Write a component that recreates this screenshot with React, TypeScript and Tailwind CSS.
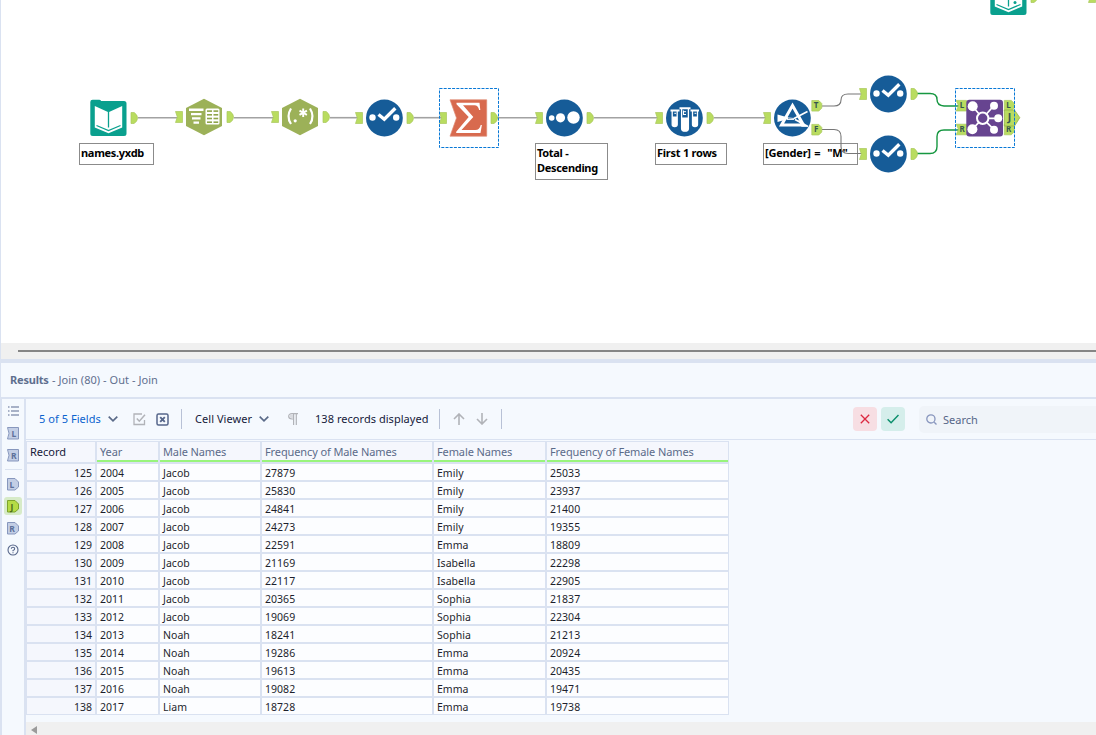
import type { ReactNode } from "react";

const rows: [number, number, string, number, string, number][] = [
  [125, 2004, "Jacob", 27879, "Emily", 25033],
  [126, 2005, "Jacob", 25830, "Emily", 23937],
  [127, 2006, "Jacob", 24841, "Emily", 21400],
  [128, 2007, "Jacob", 24273, "Emily", 19355],
  [129, 2008, "Jacob", 22591, "Emma", 18809],
  [130, 2009, "Jacob", 21169, "Isabella", 22298],
  [131, 2010, "Jacob", 22117, "Isabella", 22905],
  [132, 2011, "Jacob", 20365, "Sophia", 21837],
  [133, 2012, "Jacob", 19069, "Sophia", 22304],
  [134, 2013, "Noah", 18241, "Sophia", 21213],
  [135, 2014, "Noah", 19286, "Emma", 20924],
  [136, 2015, "Noah", 19613, "Emma", 20435],
  [137, 2016, "Noah", 19082, "Emma", 19471],
  [138, 2017, "Liam", 18728, "Emma", 19738],
];

const headers = ["Record", "Year", "Male Names", "Frequency of Male Names", "Female Names", "Frequency of Female Names"];

/* ---------- Canvas tools (each drawn in a 60x60 box centred on 30,30) ---------- */

function InPort() {
  return <path d="M1.5 24.5h7v11h-7l1.8-5.5z" fill="#b9dc60" stroke="#a9c75c" strokeWidth=".7" />;
}

function OutPort() {
  return <path d="M53 24.5h3.2q3.3 2.2 3.3 5.5t-3.3 5.5H53z" fill="#b9dc60" stroke="#a9c75c" strokeWidth=".7" />;
}

function Tool({ x, y, children }: { x: number; y: number; children: ReactNode }) {
  return (
    <svg className="absolute size-[60px] overflow-visible" style={{ left: x - 30, top: y - 30 }} viewBox="0 0 60 60">
      {children}
    </svg>
  );
}

function BookTool() {
  return (
    <>
      <path d="M12.300 14q0-2.300 2.300-2.300h6.500q1.500 0 2 1.300h22.900q2.500 0 2.500 2.500v30q0 2.500-2.500 2.500H14.800q-2.500 0-2.500-2.500z" fill="#0aa08e" />
      <path d="M16.800 18l13.700 6.200L44.200 18v21.500L30.500 45.200 16.800 39.500z" fill="#fff" />
      <path d="M30.500 24v15.500M18.500 37.500l12 5 12-5" fill="none" stroke="#0aa08e" strokeWidth="1.300" />
    </>
  );
}

function Hexagon() {
  return <path d="M30 11.700l18 9.200v18.200l-18 9.200-18-9.200V20.900z" fill="#9cb158" />;
}

function TextToColumns() {
  return (
    <>
      <Hexagon />
      <path d="M15 21.500h14.500v2.500H15zM17 26h10.500v2.300H17zM18 30.300h8.500v2.300H18zM19.500 34.500h5.500v2.300h-5.500z" fill="#fff" />
      <rect x="31.500" y="21.500" width="14" height="16" rx="1.500" fill="#fff" />
      <g fill="#8fa54a">
        {[23.3, 27, 30.7, 34.4].map((y) => (
          <g key={y}>
            <rect x="33" y={y} width="5" height="1.600" />
            <rect x="39.500" y={y} width="4.700" height="1.600" />
          </g>
        ))}
      </g>
    </>
  );
}

function RegexTool() {
  return (
    <>
      <Hexagon />
      <g fill="none" stroke="#fff" strokeWidth="2.200">
        <path d="M21 21.500q-5 8 0 15.500M40 21.500q5 8 0 15.500" />
        <path d="M33.200 21.500v8.500M29.500 23.600l7.400 4.300M36.900 23.600l-7.400 4.300" strokeWidth="1.900" />
      </g>
      <circle cx="25.200" cy="33.800" r="1.600" fill="#fff" />
    </>
  );
}

function Disc() {
  return <circle cx="30.400" cy="30" r="18.400" fill="#165c98" />;
}

function SelectTool() {
  return (
    <>
      <Disc />
      <circle cx="18.500" cy="29.500" r="3.200" fill="#fff" />
      <circle cx="42.200" cy="29.500" r="3.200" fill="#fff" />
      <path d="M24.500 26.500l5.800 4.700 11-11" fill="none" stroke="#fff" strokeWidth="3.400" />
    </>
  );
}

function SummarizeTool() {
  return (
    <>
      <path d="M12 11.800H48.700V48.200H12L18.500 30z" fill="#d86a4e" stroke="#e08d75" strokeWidth=".7" />
      <path
        d="M18.500 14.700h23l.8 7.300h-1.200q-.8-4.700-4.700-4.700H25l10.300 11.700-11.800 13h13.800q4.400 0 5.400-5h1.200l-1.400 8H18.200v-1.200l12.500-14.800L18.500 16.200z"
        fill="#fff"
      />
    </>
  );
}

function SortTool() {
  return (
    <>
      <Disc />
      <circle cx="17.700" cy="30" r="2.800" fill="#fff" />
      <circle cx="26.500" cy="29.800" r="4.600" fill="#fff" />
      <circle cx="39.500" cy="29.500" r="6.200" fill="#fff" />
    </>
  );
}

function SampleTool() {
  return (
    <>
      <Disc />
      <g fill="none" stroke="#fff">
        <path d="M16.500 22.500h9M36.500 22.500h8.500M25.500 20.300h11" strokeWidth="2" />
        <path d="M18.200 23v13.500q0 2 2.500 2t2.500-2V23M38.500 23v13.500q0 2 2.500 2t2.500-2V23M27.600 20v20.500q0 2.700 3.400 2.700t3.400-2.700V20" strokeWidth="1.300" />
      </g>
      <path d="M18.200 28.500h5v8q0 2-2.500 2t-2.500-2zM38.500 28.500h5v8q0 2-2.500 2t-2.500-2zM27.600 29.500h6.800v11q0 2.700-3.400 2.700t-3.400-2.700z" fill="#fff" />
      <path d="M29.500 22.500v4.500M29.500 23.700h2.500M29.500 26.500h2.500M20.300 25.300h1.800M40.500 25.300h1.800" stroke="#fff" strokeWidth="1" />
    </>
  );
}

function Letter({ x, y, children, big }: { x: number; y: number; children: string; big?: boolean }) {
  return (
    <text x={x} y={y} textAnchor="middle" fontSize={big ? 10.5 : 8} fontWeight="700" fill="#35564e">
      {children}
    </text>
  );
}

function TagPort({ x, y, label }: { x: number; y: number; label: string }) {
  return (
    <g>
      <path d={`M${x} ${y - 5.3}h7l3 3v4.600l-3 3h-7z`} fill="#b9dc60" stroke="#a9c75c" strokeWidth=".7" />
      <Letter x={x + 4.3} y={y + 2.6}>{label}</Letter>
    </g>
  );
}

function TagInPort({ y, label }: { y: number; label: string }) {
  return (
    <g>
      <path d={`M1.200 ${y - 5.3}H11.500v10.600H1.200l2.300-5.300z`} fill="#b9dc60" stroke="#a9c75c" strokeWidth=".7" />
      <Letter x={7} y={y + 2.6}>{label}</Letter>
    </g>
  );
}

function FilterTool() {
  return (
    <>
      <Disc />
      <path d="M15.500 26.500L26 29.500v1.500l-10.500 3z" fill="#fff" />
      <path d="M30.500 17.500L41.500 37H19.500z" fill="none" stroke="#fff" strokeWidth="3" />
      <path d="M32 30.500L45.500 23.500M33 31.500L46 38.500" stroke="#fff" strokeWidth="1.700" />
      <path d="M36 31.500l9.500 7.200h-6z" fill="#fff" />
      <path d="M25 29.800l8 .8M25 31.500h7" stroke="#fff" strokeWidth=".9" />
    </>
  );
}

function JoinTool() {
  return (
    <>
      <TagInPort y={17.700} label="L" />
      <TagInPort y={41.500} label="R" />
      <TagPort x={49.300} y={17.700} label="L" />
      <TagPort x={49.300} y={41.500} label="R" />
      <rect x="11.300" y="11.700" width="36.700" height="36.700" rx="3" fill="#674490" />
      <g stroke="#fff" strokeWidth="1.700">
        <path d="M17.700 18.500L27.700 30.300M39 17.500L27.700 30.300M43.200 30.300H27.700M17.400 41.200L27.700 30.300M39 41.700L27.700 30.300" />
      </g>
      <g fill="#fff">
        <circle cx="17.700" cy="18.300" r="5" />
        <circle cx="39" cy="17.700" r="4" />
        <circle cx="43.200" cy="30.300" r="4" />
        <circle cx="17.400" cy="41.200" r="5" />
        <circle cx="39" cy="41.700" r="4" />
      </g>
      <circle cx="27.700" cy="30.300" r="5.700" fill="#674490" stroke="#fff" strokeWidth="2" />
      <path d="M49.300 22h10.200L64.800 29.700 59.500 38H49.300z" fill="#b9dc60" stroke="#93b146" strokeWidth=".8" />
      <Letter x={54.500} y={33.200} big>J</Letter>
    </>
  );
}

function Wires() {
  const straight = [[138, 178], [234, 274], [330, 358], [414, 442], [497, 538], [594, 658], [714, 766]];
  return (
    <svg className="absolute inset-0 h-full w-full" viewBox="1 0 1095 343">
      {straight.map(([a, b]) => (
        <path key={a} d={`M${a} 117.700H${b}`} stroke="#a2a2a2" strokeWidth="1.600" />
      ))}
      <g fill="none" stroke="#777" strokeWidth="1.100">
        <path d="M822 106h12q7 0 7-6t7-6h14" />
        <path d="M822 129.500h12q7 0 7 7v10q0 7 7 7h14" />
      </g>
      <g fill="none" stroke="#169741" strokeWidth="1.400">
        <path d="M917 93.500h13q7 0 7 6t7 6.500h15" />
        <path d="M917 153.500h13q7 0 7-7v-10q0-6.500 7-6.500h15" />
      </g>
    </svg>
  );
}

function Note({ className, children }: { className: string; children: ReactNode }) {
  return (
    <div className={`absolute border border-[#8b8b8b] bg-white pt-px pl-px text-[11px] leading-[15px] font-bold whitespace-pre text-black ${className}`}>
      {children}
    </div>
  );
}

function Canvas() {
  const ports = (node: ReactNode) => (
    <>
      <InPort />
      <OutPort />
      {node}
    </>
  );
  return (
    <div className="relative h-[343px] shrink-0 overflow-hidden bg-white">
      <Note className="top-[143px] left-[78px] h-[22px] w-[75px] tracking-[-0.3px]">names.yxdb</Note>
      <Note className="top-[143px] left-[534px] h-[37px] w-[73px] tracking-[-0.3px]">{"Total -\nDescending"}</Note>
      <Note className="top-[143px] left-[654px] h-[22px] w-[72px] tracking-[-0.25px]">First 1 rows</Note>
      <Note className="top-[143px] left-[762px] h-[22px] w-[95px] tracking-[-0.2px] [word-spacing:0.8px]">[Gender] =  "M"</Note>
      <Wires />
      <Tool x={107} y={117.500}><OutPort /><BookTool /></Tool>
      <Tool x={203} y={117.300}>{ports(<TextToColumns />)}</Tool>
      <Tool x={299} y={117.300}>{ports(<RegexTool />)}</Tool>
      <Tool x={383} y={117.500}>{ports(<SelectTool />)}</Tool>
      <Tool x={467} y={117.500}>{ports(<SummarizeTool />)}</Tool>
      <Tool x={563} y={117.500}>{ports(<SortTool />)}</Tool>
      <Tool x={683} y={117.500}>{ports(<SampleTool />)}</Tool>
      <Tool x={791} y={117.500}>
        <InPort />
        <TagPort x={49.800} y={17.800} label="T" />
        <TagPort x={49.800} y={41.700} label="F" />
        <FilterTool />
      </Tool>
      <Tool x={887} y={93.500}>{ports(<SelectTool />)}</Tool>
      <Tool x={887} y={153.500}>{ports(<SelectTool />)}</Tool>
      <Tool x={984} y={117.500}><JoinTool /></Tool>
      <Tool x={1007} y={-3}>
        <OutPort />
        <BookTool />
        <circle cx="37" cy="35.500" r="1.500" fill="#0aa08e" />
      </Tool>
      <Tool x={1115.500} y={-3}><InPort /></Tool>
      <svg className="absolute inset-0 h-full w-full" viewBox="1 0 1095 343">
        <g fill="none" stroke="#0878d6" strokeDasharray="3 1.200">
          <rect x="439.500" y="88.500" width="59" height="59" />
          <rect x="955.500" y="88.500" width="59" height="59" />
        </g>
      </svg>
    </div>
  );
}

/* ---------- Results pane ---------- */

function AnchorIcon({ kind, label, green }: { kind: "in" | "out"; label: string; green?: boolean }) {
  return (
    <svg className="h-[13px] w-[12px]" viewBox="0 0 12 13">
      <path
        d={kind === "in" ? "M.5.5h11v11.500H.5Q3.500 6.300.500.500z" : "M.5.500h7.500L11.500 4v5L8 12H.5z"}
        fill={green ? "#b5dc45" : "#c3cee5"}
        stroke={green ? "#7da32c" : "#8797bd"}
      />
      <text x={kind === "in" ? 6.8 : 5} y="9.500" textAnchor="middle" fontSize="8.500" fontWeight="700" fill={green ? "#4c6b1d" : "#5d719b"}>
        {label}
      </text>
    </svg>
  );
}

function SideBar() {
  return (
    <div className="flex w-[22px] shrink-0 flex-col items-center pt-[7px]">
      <svg className="h-[10px] w-[11px]" viewBox="0 0 11 10" stroke="#5a6a90" strokeWidth="1.100">
        <path d="M0 1h1.500M3 1h8M0 5h1.500M3 5h8M0 9h1.500M3 9h8" />
      </svg>
      <div className="mt-[11px] flex flex-col gap-[9px]">
        <AnchorIcon kind="in" label="L" />
        <AnchorIcon kind="in" label="R" />
      </div>
      <div className="mt-[7px] h-px w-[17px] bg-[#dae2f0]" />
      <div className="mt-[8px] flex h-[13px] items-center"><AnchorIcon kind="out" label="L" /></div>
      <div className="mt-[6px] flex h-[18px] w-[18px] items-center justify-center rounded-[3px] bg-[#d7ebc8]">
        <AnchorIcon kind="out" label="J" green />
      </div>
      <div className="mt-[7px]"><AnchorIcon kind="out" label="R" /></div>
      <svg className="mt-[9px] size-[12px]" viewBox="0 0 12 12" fill="none" stroke="#56668a">
        <circle cx="6" cy="6" r="5" strokeWidth="1.100" />
        <path d="M4.300 4.800q0-1.600 1.700-1.600t1.700 1.500q0 1-1.700 1.900v.7M6 8.200v1.100" strokeWidth="1.100" />
      </svg>
    </div>
  );
}

function Chevron({ className }: { className: string }) {
  return (
    <svg className={`h-[6px] w-[10px] ${className}`} viewBox="0 0 10 6" fill="none" stroke="#5a6a88" strokeWidth="1.700">
      <path d="M.7.700L5 4.800 9.300.700" />
    </svg>
  );
}

function ToolBar() {
  return (
    <div className="flex h-[40px] shrink-0 items-center text-[11px] text-[#16193a]">
      <div className="ml-[13px] w-[63px] tracking-[0.050px] whitespace-nowrap text-[#0b63ce]">5 of 5 Fields</div>
      <Chevron className="ml-[6px]" />
      <svg className="ml-[15px] size-[13px]" viewBox="0 0 13 13" fill="none" stroke="#b1b3b8" strokeWidth="1.300">
        <path d="M11.500 7v4.500H1V1h8" />
        <path d="M3.800 5.500l2.500 2.700L12 1.800" strokeWidth="1.500" />
      </svg>
      <svg className="ml-[10px] size-[13px]" viewBox="0 0 13 13" fill="none" stroke="#56668a" strokeWidth="1.500">
        <rect x="1" y="1" width="11" height="11" rx="1.500" />
        <path d="M4.200 4.200l4.600 4.600M8.800 4.200L4.200 8.800" strokeWidth="1.900" />
      </svg>
      <div className="ml-[12px] h-[20px] w-px bg-[#b8c1d6]" />
      <div className="ml-[13px] w-[58px] tracking-[0.050px] whitespace-nowrap">Cell Viewer</div>
      <Chevron className="ml-[6px]" />
      <svg className="ml-[19px] h-[12px] w-[10px]" viewBox="0 0 10 12" fill="none" stroke="#b1b3b8">
        <path d="M10 .7H4Q.7.700.7 3.300T4 6h1.500M5.600.700V12M8.300.700V12" strokeWidth="1.200" />
        <path d="M5 1.500H4Q1.500 1.500 1.500 3.400T5 5z" fill="#d9dbe0" stroke="none" />
      </svg>
      <div className="ml-[17px] w-[113px] tracking-[0.040px] whitespace-nowrap">138 records displayed</div>
      <div className="ml-[11px] h-[20px] w-px bg-[#b8c1d6]" />
      <svg className="ml-[13px] h-[12px] w-[12px]" viewBox="0 0 12 12" fill="none" stroke="#b1b3b8" strokeWidth="1.600">
        <path d="M6 12V1M1 6l5-5 5 5" />
      </svg>
      <svg className="ml-[11px] h-[12px] w-[12px]" viewBox="0 0 12 12" fill="none" stroke="#b1b3b8" strokeWidth="1.600">
        <path d="M6 0v11M1 6l5 5 5-5" />
      </svg>
      <div className="ml-[13px] h-[20px] w-px bg-[#b8c1d6]" />
      <div className="ml-auto flex h-full w-[243px] shrink-0 items-center">
        <div className="flex size-[24px] items-center justify-center rounded-[4px] bg-[#f7dee3]">
          <svg className="size-[10px]" viewBox="0 0 10 10" stroke="#dc2840" strokeWidth="1.300">
            <path d="M.8.800l8.400 8.400M9.200.800L.8 9.200" />
          </svg>
        </div>
        <div className="ml-[4px] flex size-[24px] items-center justify-center rounded-[4px] bg-[#d5eeeb]">
          <svg className="h-[10px] w-[12px]" viewBox="0 0 12 10" fill="none" stroke="#0c8f6c" strokeWidth="1.500">
            <path d="M.6 5.200l3.500 3.500L11.500 1" />
          </svg>
        </div>
        <div className="ml-[14px] flex h-[27px] grow items-center rounded-l-[5px] bg-[#f0f4f9] pl-[7px] text-[#566688]">
          <svg className="size-[11px]" viewBox="0 0 11 11" fill="none" stroke="#8795bd" strokeWidth="1.300">
            <circle cx="4.900" cy="4.900" r="4.100" />
            <path d="M8.200 8.200L10.500 10.500" />
          </svg>
          <span className="ml-[6px] pt-[2px]">Search</span>
        </div>
      </div>
    </div>
  );
}

function Table() {
  return (
    <div className="mt-px grid w-[703px] shrink-0 grid-cols-[68px_61px_100px_170px_111px_181px] gap-[2px] bg-[#dae2f1] p-px text-[10.500px] text-[#1d1f2d]">
      {headers.map((h, i) => (
        <div
          key={h}
          className={`flex h-[20px] items-center bg-[#f5f7fd] pl-[3px] text-[11px] whitespace-nowrap ${i ? "border-b-2 border-[#99f47c] pt-[2px] tracking-[-0.110px] text-[#5b6b8a]" : "text-[#16193a]"}`}
        >
          {h}
        </div>
      ))}
      {rows.map((row) =>
        row.map((v, i) => (
          <div
            key={`${row[0]}-${i}`}
            className={`flex h-[16px] items-center pt-[2px] leading-[14px] tracking-[0.030px] ${i ? "bg-[#fcfdff] pl-[3px]" : "justify-end bg-[#f5f7fd] pr-[3px]"}`}
          >
            {v}
          </div>
        )),
      )}
    </div>
  );
}

export default function App() {
  return (
    <div className="flex h-[735px] w-[1096px] flex-col overflow-hidden border-l border-[#dae2f1] bg-[#f5f9fe] font-['Noto_Sans','Open_Sans',sans-serif]">
      <Canvas />
      <div className="h-[16px] shrink-0 bg-[#f0f0f0] pt-[7px] pl-[17px]">
        <div className="h-[2px] bg-[#858585]" />
      </div>
      <div className="h-[4px] shrink-0 bg-[#dae2f1]" />
      <div className="flex h-[34px] shrink-0 items-center pl-[9px] text-[11px] whitespace-pre text-[#5f6f8f]">
        <b className="w-[37px] font-bold tracking-[-0.200px]">Results</b>
        <span className="ml-[5px] tracking-[0.040px]">- Join (80) - Out - Join</span>
      </div>
      <div className="h-[2px] shrink-0 bg-[#dae2f1]" />
      <div className="flex min-h-0 grow border-l border-[#dae2f1]">
        <SideBar />
        <div className="w-[2px] shrink-0 bg-[#dae2f1]" />
        <div className="flex min-w-0 grow flex-col">
          <ToolBar />
          <div className="h-px shrink-0 bg-[#dae2f1]" />
          <Table />
          <div className="mt-auto h-[13px] shrink-0 bg-[#f0f0f0] pt-[4px] pl-[5px]">
            <svg className="h-[8px] w-[6px]" viewBox="0 0 6 8"><path d="M6 0v8L0 4z" fill="#9b9b9b" /></svg>
          </div>
        </div>
      </div>
    </div>
  );
}
